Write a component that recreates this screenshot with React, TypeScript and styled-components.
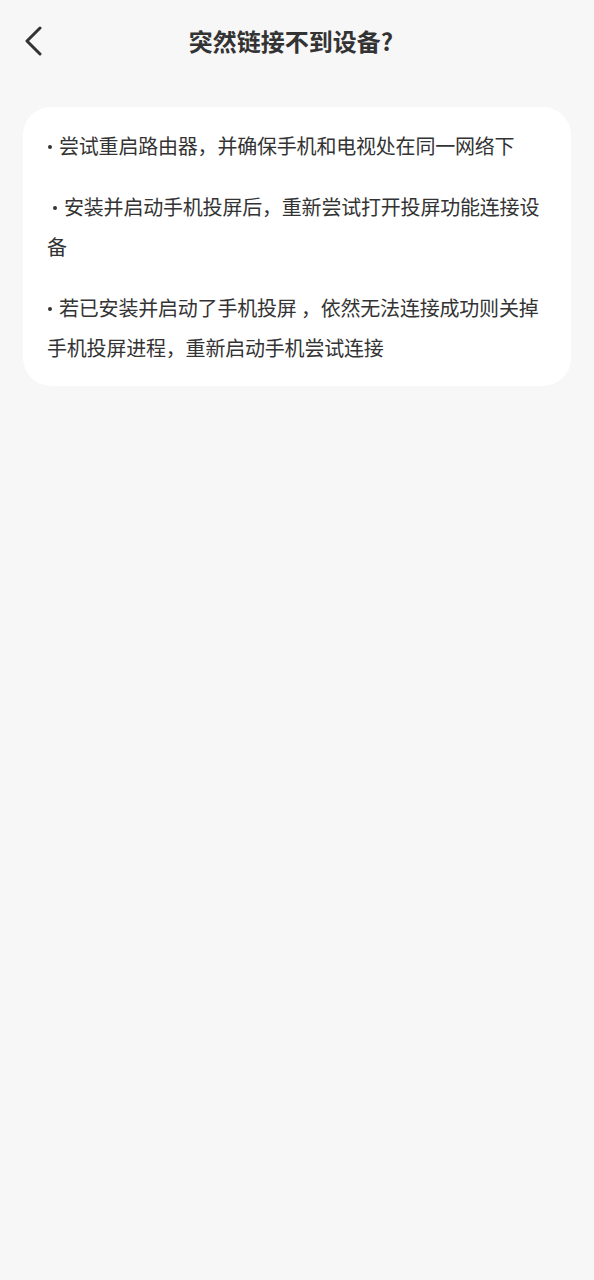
import React from "react";
import styled, { createGlobalStyle } from "styled-components";

const GlobalStyle = createGlobalStyle`
  html, body {
    margin: 0;
    padding: 0;
    background: #f7f7f7;
  }
  body {
    font-family: "Noto Sans CJK SC", "Noto Sans", sans-serif;
    color: #333;
  }
`;

const Page = styled.div`
  width: 594px;
  min-height: 1280px;
  background: #f7f7f7;
  display: flex;
  flex-direction: column;
`;

const Header = styled.header`
  position: relative;
  height: 82px;
  display: flex;
  align-items: center;
  justify-content: center;
`;

const BackButton = styled.button`
  position: absolute;
  left: 18px;
  top: 22px;
  width: 32px;
  height: 38px;
  padding: 0;
  border: none;
  background: transparent;
  display: flex;
  align-items: center;
  justify-content: center;
`;

const Title = styled.h1`
  margin: 0 12px 0 0;
  font-size: 24px;
  font-weight: 700;
  color: #333;
  line-height: 1;
`;

const Card = styled.section`
  margin: 25px 23px 0;
  background: #fff;
  border-radius: 28px;
  padding: 19px 24px 18px;
  display: flex;
  flex-direction: column;
  gap: 21px;
`;

const Item = styled.p`
  margin: 0;
  font-size: 20px;
  line-height: 40px;
  letter-spacing: -0.2px;
  color: #333;
`;

const Bullet = styled.span<{ $lead?: boolean }>`
  display: inline-block;
  width: 4px;
  height: 4px;
  border-radius: 50%;
  background: #333;
  vertical-align: middle;
  margin: 0 7px 4px ${(p) => (p.$lead ? "6px" : "1px")};
`;

export default function App() {
  return (
    <Page>
      <GlobalStyle />
      <Header>
        <BackButton aria-label="返回">
          <svg width="22" height="30" viewBox="0 0 22 30" fill="none">
            <path
              d="M17 2 L4 15 L17 28"
              stroke="#333"
              strokeWidth="3"
              strokeLinecap="round"
              strokeLinejoin="round"
            />
          </svg>
        </BackButton>
        <Title>突然链接不到设备?</Title>
      </Header>
      <Card>
        <Item>
          <Bullet />尝试重启路由器，并确保手机和电视处在同一网络下
        </Item>
        <Item>
          <Bullet $lead />安装并启动手机投屏后，重新尝试打开投屏功能连接设备
        </Item>
        <Item>
          <Bullet />若已安装并启动了手机投屏 ，依然无法连接成功则关掉手机投屏进程，重新启动手机尝试连接
        </Item>
      </Card>
    </Page>
  );
}
